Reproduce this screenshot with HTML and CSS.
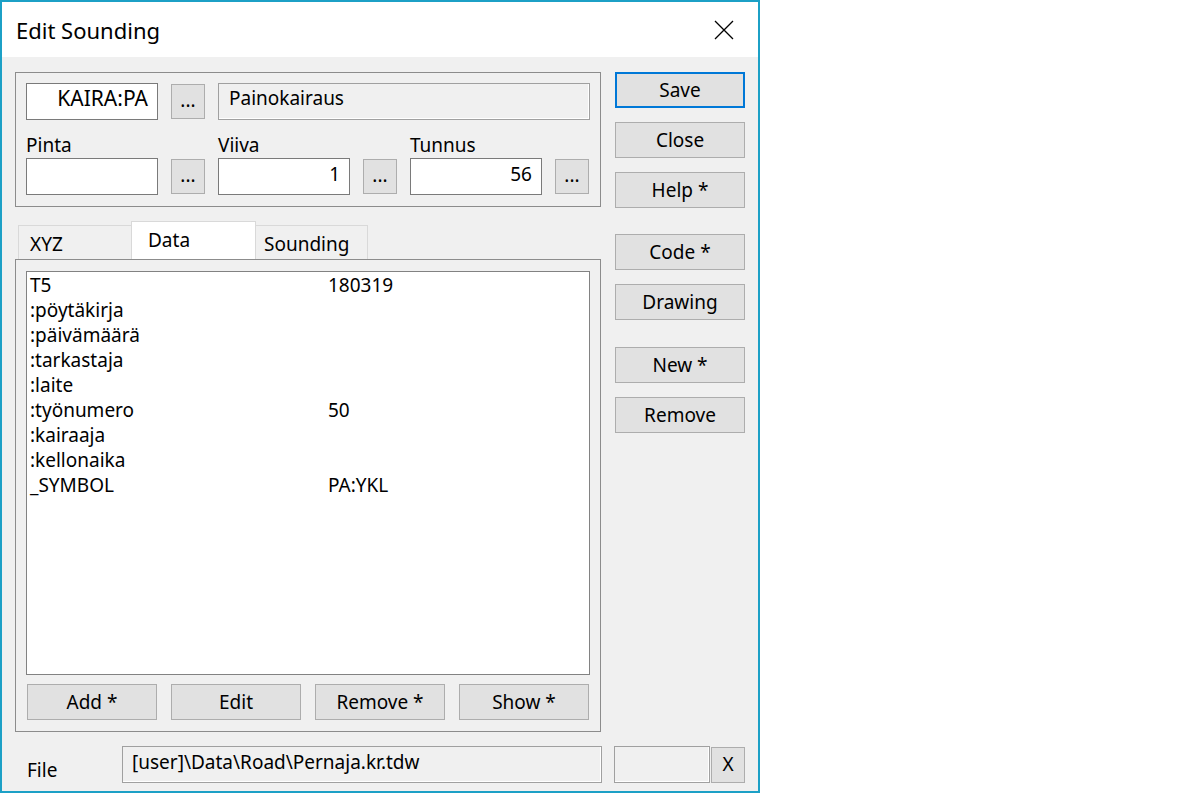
FILE: index.html
```
<html lang="en">
<head>
  <meta charset="UTF-8">
  <title>Edit Sounding</title>
  <link rel="stylesheet" href="styles.css">
</head>
<body>
  <div class="dialog">
    <div class="titlebar">
      <span class="title">Edit Sounding</span>
      <svg class="close-icon" width="20" height="20" viewBox="0 0 20 20">
        <path d="M1 1 L19 19 M19 1 L1 19" stroke="#000" stroke-width="1.3" fill="none"/>
      </svg>
    </div>

    <div class="content">
      <div class="main">
        <div class="left">
          <div class="group header-group">
            <div class="row">
              <div class="field input code">KAIRA:PA</div>
              <div class="btn dots">...</div>
              <div class="field static desc">Painokairaus</div>
            </div>
            <div class="columns">
              <div class="col">
                <div class="label">Pinta</div>
                <div class="pair">
                  <div class="field input"></div>
                  <div class="btn dots">...</div>
                </div>
              </div>
              <div class="col">
                <div class="label">Viiva</div>
                <div class="pair">
                  <div class="field input">1</div>
                  <div class="btn dots">...</div>
                </div>
              </div>
              <div class="col">
                <div class="label">Tunnus</div>
                <div class="pair">
                  <div class="field input">56</div>
                  <div class="btn dots">...</div>
                </div>
              </div>
            </div>
          </div>

          <div class="tabs">
            <div class="tab tab-xyz">XYZ</div>
            <div class="tab tab-data active">Data</div>
            <div class="tab tab-sounding">Sounding</div>
          </div>

          <div class="group panel">
            <div class="listbox">
              <div class="list-row"><span>T5</span><span>180319</span></div>
              <div class="list-row"><span>:pöytäkirja</span><span></span></div>
              <div class="list-row"><span>:päivämäärä</span><span></span></div>
              <div class="list-row"><span>:tarkastaja</span><span></span></div>
              <div class="list-row"><span>:laite</span><span></span></div>
              <div class="list-row"><span>:työnumero</span><span>50</span></div>
              <div class="list-row"><span>:kairaaja</span><span></span></div>
              <div class="list-row"><span>:kellonaika</span><span></span></div>
              <div class="list-row"><span>_SYMBOL</span><span>PA:YKL</span></div>
            </div>
            <div class="list-buttons">
              <div class="btn">Add *</div>
              <div class="btn">Edit</div>
              <div class="btn">Remove *</div>
              <div class="btn">Show *</div>
            </div>
          </div>
        </div>

        <div class="side">
          <div class="btn default">Save</div>
          <div class="btn">Close</div>
          <div class="btn">Help *</div>
          <div class="btn gap-big">Code *</div>
          <div class="btn">Drawing</div>
          <div class="btn gap-big2">New *</div>
          <div class="btn">Remove</div>
        </div>
      </div>

      <div class="file-row">
        <div class="file-label">File</div>
        <div class="field static file-path">[user]\Data\Road\Pernaja.kr.tdw</div>
        <div class="field static file-extra"></div>
        <div class="btn clear-btn">X</div>
      </div>
    </div>
  </div>
</body>
</html>
```

FILE: styles.css
```
body {
  margin: 0;
  background: #fff;
  font-family: "Noto Sans", "Open Sans", sans-serif;
  font-size: 19px;
  color: #000;
}

.dialog {
  width: 760px;
  height: 793px;
  box-sizing: border-box;
  border: 2px solid #1ca0c6;
  background: #f0f0f0;
}

.titlebar {
  height: 55px;
  background: #fff;
  display: flex;
  align-items: center;
  justify-content: space-between;
  padding: 1px 24px 0 14px;
  box-sizing: border-box;
}

.title {
  font-size: 22px;
}

.content {
  padding: 15px 13px 0 13px;
}

.main {
  display: flex;
  gap: 14px;
}

.left {
  width: 586px;
}

.group {
  border: 1px solid #8c8c8c;
  box-sizing: border-box;
}

.header-group {
  height: 135px;
  padding: 10px 10px 0 10px;
}

.row {
  display: flex;
  align-items: center;
  gap: 13px;
  height: 37px;
}

.field {
  height: 37px;
  box-sizing: border-box;
  border: 1px solid #7a7a7a;
  display: flex;
  align-items: center;
  line-height: 25px;
  padding: 0 9px 5px 9px;
  white-space: nowrap;
}

.input {
  width: 132px;
  background: #fff;
  justify-content: flex-end;
}

.code {
  font-size: 21px;
  padding-bottom: 6px;
}

.static {
  background: #f0f0f0;
  border-color: #a0a0a0;
  box-shadow: inset -1px -1px 0 #fff;
}

.desc {
  width: 372px;
  padding-left: 10px;
  padding-bottom: 6px;
}

.btn {
  height: 36px;
  box-sizing: border-box;
  background: #e1e1e1;
  border: 1px solid #adadad;
  display: flex;
  align-items: center;
  justify-content: center;
  line-height: 25px;
  white-space: nowrap;
}

.dots {
  width: 34px;
  height: 35px;
  padding-bottom: 2px;
}

.columns {
  display: grid;
  grid-template-columns: 192px 192px auto;
  margin-top: 14px;
}

.label {
  height: 22px;
  line-height: 22px;
  margin-bottom: 2px;
}

.pair {
  display: flex;
  align-items: center;
  gap: 13px;
}

.tabs {
  display: flex;
  align-items: flex-end;
  height: 38px;
  margin-top: 14px;
  padding-left: 3px;
}

.tab {
  height: 34px;
  box-sizing: border-box;
  border: 1px solid #d9d9d9;
  border-bottom: none;
  line-height: 25px;
  padding-top: 6px;
  margin-right: -1px;
}

.tab-xyz {
  width: 114px;
  padding-left: 11px;
}

.tab-data {
  width: 125px;
  padding-left: 16px;
}

.tab-sounding {
  width: 113px;
  padding-left: 8px;
}

.tab.active {
  height: 38px;
  background: #fff;
  position: relative;
  z-index: 1;
}

.panel {
  height: 473px;
  padding: 11px 10px 0 10px;
}

.listbox {
  height: 404px;
  box-sizing: border-box;
  background: #fff;
  border: 1px solid #828282;
  padding: 1px 0 0 3px;
}

.list-row {
  display: grid;
  grid-template-columns: 298px 1fr;
  height: 25px;
  line-height: 25px;
}

.list-buttons {
  display: flex;
  gap: 14px;
  margin-top: 9px;
  padding-left: 1px;
}

.list-buttons .btn {
  width: 130px;
}

.side {
  width: 130px;
  display: flex;
  flex-direction: column;
  gap: 14px;
}

.side .btn {
  width: 130px;
}

.btn.default {
  border: 2px solid #0078d7;
}

.gap-big { margin-top: 12px; }
.gap-big2 { margin-top: 13px; }

.file-row {
  display: flex;
  height: 37px;
  margin-top: 14px;
}

.file-label {
  width: 95px;
  padding-left: 12px;
  align-self: flex-end;
  line-height: 25px;
}

.file-path {
  width: 480px;
  padding-bottom: 4px;
}

.file-extra {
  width: 96px;
  margin-left: 12px;
}

.clear-btn {
  width: 34px;
  margin-left: 1px;
  align-self: flex-end;
  padding-bottom: 1px;
}
```
